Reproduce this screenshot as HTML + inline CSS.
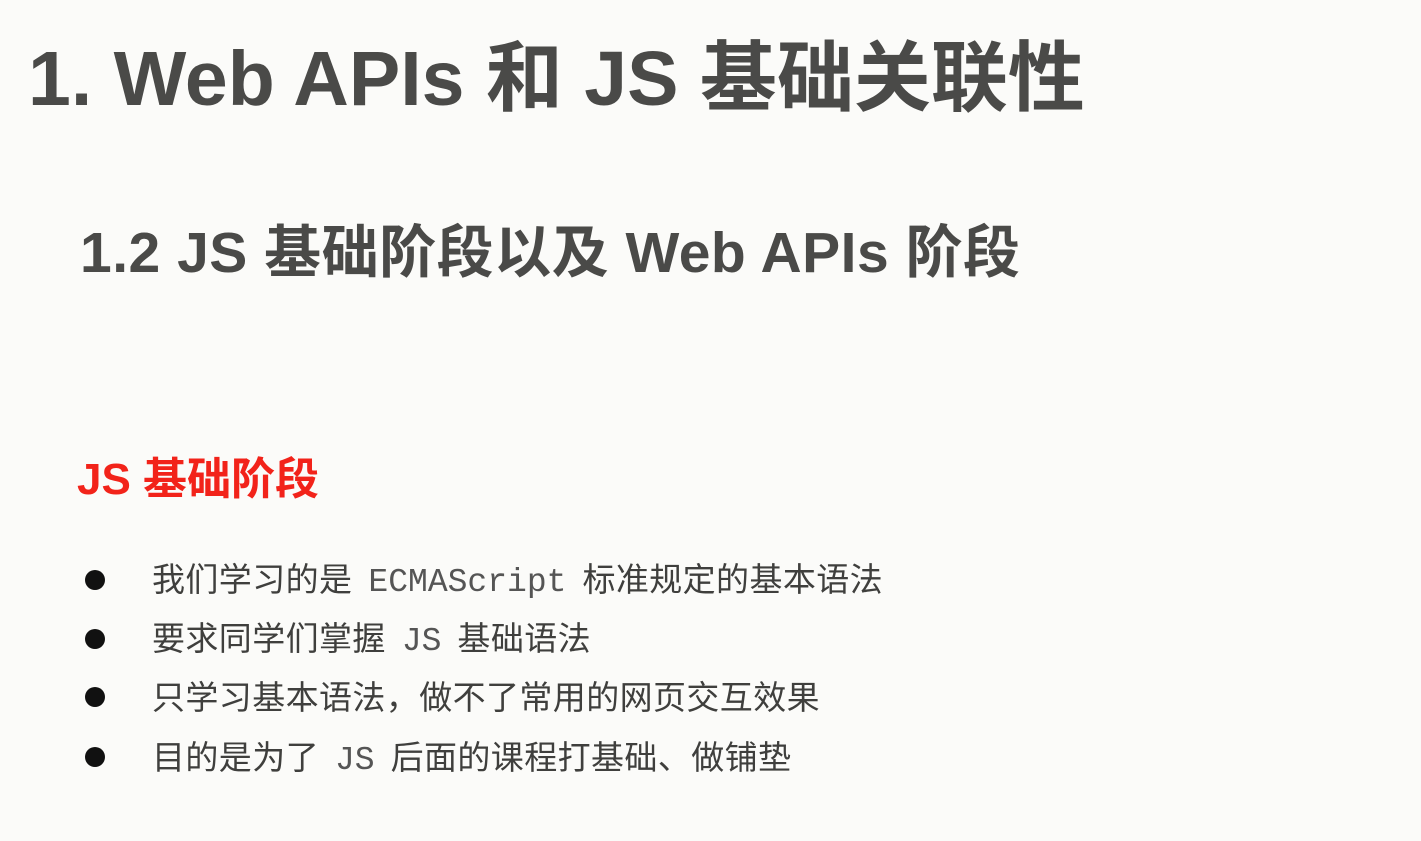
<!DOCTYPE html>
<html><head><meta charset="utf-8"><style>
html,body{margin:0;padding:0;width:1421px;height:841px;overflow:hidden;background:#fbfbf9;}
body{position:relative;font-family:"Liberation Sans","Noto Sans CJK SC",sans-serif;color:#4a4a48;}
.t{position:absolute;white-space:nowrap;font-weight:bold;}
#h1{left:28px;top:33px;font-size:77px;line-height:92px;}
#h2{left:80px;top:218px;font-size:57px;line-height:70px;letter-spacing:0.5px;}
#h3{left:77px;top:452px;font-size:44px;line-height:56px;color:#f2231a;}
.li{position:absolute;left:152px;font-size:33px;line-height:40px;white-space:nowrap;color:#3f3f3d;letter-spacing:0.4px;font-family:"Liberation Sans","Noto Sans CJK SC",sans-serif;}
.li code{font-family:"Liberation Mono",monospace;font-size:33px;color:#555;margin:0 16px;letter-spacing:0;}
.dot{position:absolute;left:85px;width:20px;height:20px;border-radius:50%;background:#111;}
</style></head><body>
<div class="t" id="h1">1. Web APIs 和 JS 基础关联性</div>
<div class="t" id="h2">1.2 JS 基础阶段以及 Web APIs 阶段</div>
<div class="t" id="h3">JS 基础阶段</div>
<div class="dot" style="top:570px"></div>
<div class="li" style="top:560px">我们学习的是<code>ECMAScript</code>标准规定的基本语法</div>
<div class="dot" style="top:629px"></div>
<div class="li" style="top:619px">要求同学们掌握<code>JS</code>基础语法</div>
<div class="dot" style="top:687px"></div>
<div class="li" style="top:678px">只学习基本语法，做不了常用的网页交互效果</div>
<div class="dot" style="top:747px"></div>
<div class="li" style="top:738px">目的是为了<code>JS</code>后面的课程打基础、做铺垫</div>
</body></html>
